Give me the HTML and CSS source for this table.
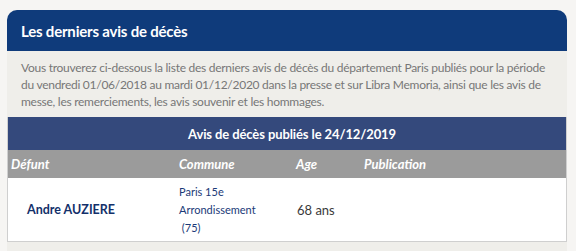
FILE: index.html
```html
<!DOCTYPE html>
<html lang="fr">
<head>
<meta charset="utf-8">
<title>Les derniers avis de décès</title>
<link rel="stylesheet" href="styles.css">
</head>
<body>
<section class="card">
  <h2 class="card-title">Les derniers avis de décès</h2>
  <p class="intro">Vous trouverez ci-dessous la liste des derniers avis de décès du département Paris publiés pour la période du vendredi 01/06/2018 au mardi 01/12/2020 dans la presse et sur Libra Memoria, ainsi que les avis de messe, les remerciements, les avis souvenir et les hommages.</p>
  <table class="avis">
    <thead>
      <tr class="day"><th colspan="4">Avis de décès publiés le 24/12/2019</th></tr>
      <tr class="cols">
        <th class="c-name">Défunt</th>
        <th class="c-commune">Commune</th>
        <th class="c-age">Age</th>
        <th class="c-pub">Publication</th>
      </tr>
    </thead>
    <tbody>
      <tr>
        <td class="name"><a href="#">Andre AUZIERE</a></td>
        <td class="commune">Paris 15e<br>Arrondissement<br>&nbsp;(75)</td>
        <td class="age">68 ans</td>
        <td class="pub"></td>
      </tr>
    </tbody>
  </table>
</section>
</body>
</html>
```

FILE: styles.css
```css
html, body {
  margin: 0;
  padding: 0;
  background: #f6f5f3;
}
body {
  padding: 10px 9px 0 7px;
  font-family: Lato, "Open Sans", sans-serif;
}
.card {
  background: #efeeea;
  border-radius: 10px 10px 0 0;
  overflow: hidden;
  height: 241px;
}
.card-title {
  margin: 0;
  background: #0f3b7b;
  color: #fff;
  font-size: 15px;
  font-weight: 700;
  height: 41px;
  line-height: 42px;
  padding: 0 14px;
  letter-spacing: -0.2px;
}
.intro {
  margin: 0;
  padding: 8px 14px 0 14px;
  height: 58px;
  color: #777;
  font-size: 12px;
  line-height: 17px;
  letter-spacing: -0.27px;
}
.avis {
  width: 100%;
  border-collapse: collapse;
  background: #fff;
  border: 1px solid #cfcfcf;
  border-top: 0;
}
.avis th, .avis td {
  padding: 0;
  text-align: left;
  vertical-align: middle;
}
.day th {
  background: #34497c;
  color: #fff;
  font-size: 13px;
  font-weight: 700;
  text-align: center;
  height: 33px;
  padding-left: 10px;
  letter-spacing: -0.1px;
}
.cols th {
  background: #9b9b9b;
  color: #fff;
  font-size: 13px;
  font-style: italic;
  font-weight: 700;
  height: 28px;
  padding-left: 3px;
}
.c-name { width: 165px; }
.c-commune { width: 114px; }
.c-age { width: 65px; }
tbody td {
  height: 63px;
  font-size: 12px;
  color: #333;
}
.name { padding-left: 19px !important; }
.name a {
  color: #13306a;
  font-weight: 700;
  text-decoration: none;
  font-size: 12.5px;
}
.commune {
  color: #1a3a78 !important;
  font-size: 11px !important;
  line-height: 18px;
  padding-left: 3px !important;
}
.age {
  font-size: 13px !important;
  padding-left: 4px !important;
  color: #3a3a3a;
}
```
